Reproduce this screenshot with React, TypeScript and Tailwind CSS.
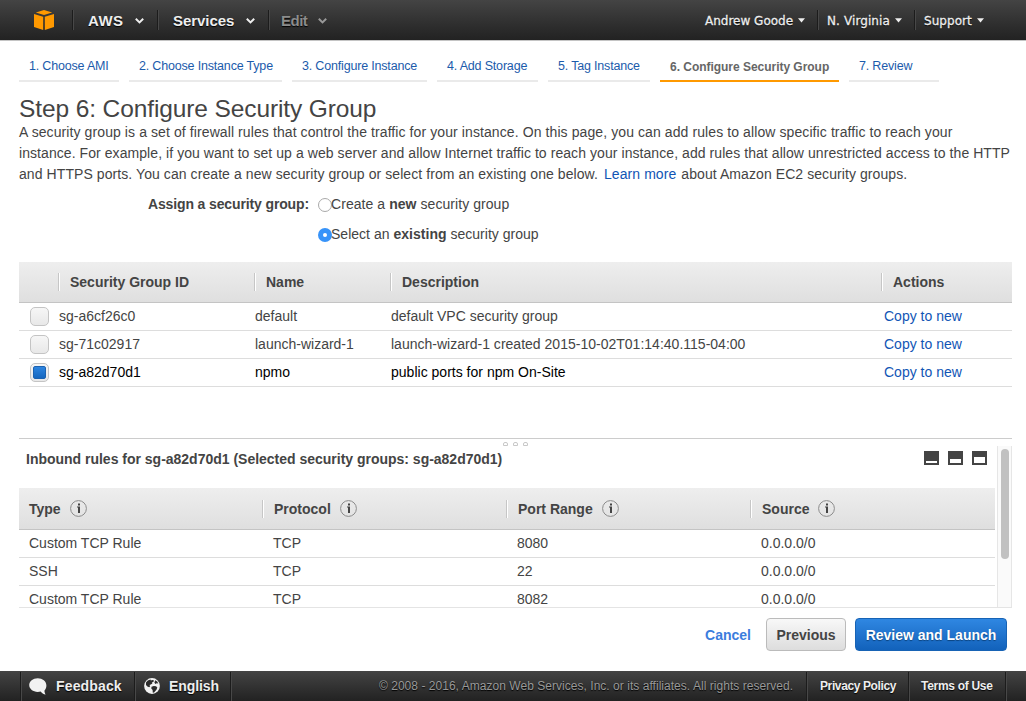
import React from "react";

const tabs = [
  { label: "1. Choose AMI", width: "w-[100px]" },
  { label: "2. Choose Instance Type", width: "w-[153px]" },
  { label: "3. Configure Instance", width: "w-[135px]" },
  { label: "4. Add Storage", width: "w-[101px]" },
  { label: "5. Tag Instance", width: "w-[102px]" },
  { label: "6. Configure Security Group", width: "w-[179px]", active: true },
  { label: "7. Review", width: "w-[90px]" },
];

const groups = [
  { id: "sg-a6cf26c0", name: "default", description: "default VPC security group" },
  { id: "sg-71c02917", name: "launch-wizard-1", description: "launch-wizard-1 created 2015-10-02T01:14:40.115-04:00" },
  { id: "sg-a82d70d1", name: "npmo", description: "public ports for npm On-Site", selected: true },
];

const rules = [
  { type: "Custom TCP Rule", protocol: "TCP", port: "8080", source: "0.0.0.0/0" },
  { type: "SSH", protocol: "TCP", port: "22", source: "0.0.0.0/0" },
  { type: "Custom TCP Rule", protocol: "TCP", port: "8082", source: "0.0.0.0/0" },
];

function Chevron({ className }: { className: string }) {
  return (
    <svg viewBox="0 0 9 6" className={`mt-[2px] h-[6px] w-[9px] shrink-0 ${className}`} fill="none" stroke="currentColor" strokeWidth="2">
      <path d="M0.8 0.8 4.5 4.4 8.2 0.8" />
    </svg>
  );
}

function Caret() {
  return (
    <svg viewBox="0 0 7 5" className="h-[5px] w-[7px] shrink-0" fill="currentColor">
      <path d="M0 0.3h7L3.5 4.5z" />
    </svg>
  );
}

function Divider() {
  return <span className="h-5 w-px shrink-0 bg-[#1c1c1c] shadow-[1px_0_0_#484848]" />;
}

function BarDivider() {
  return <span className="h-[29px] w-px shrink-0 bg-[#1c1c1c] shadow-[1px_0_0_#484848]" />;
}

function Header() {
  return (
    <header className="flex h-[41px] shrink-0 items-center border-b border-[#c4c4c4] bg-linear-to-b from-[#444] to-[#222] text-[#eee] [text-shadow:0_1px_1px_#000]">
      <svg viewBox="0 0 20 20" className="ml-[34px] h-5 w-5 shrink-0" fill="#ff9900">
        <path d="M10 0 18.2 2.4 10 5 1.8 2.4z" />
        <path d="M0 3.9 9.2 6.8V20L0 17z" />
        <path d="M20 3.9 10.8 6.8V20L20 17z" />
      </svg>
      <div className="ml-[18px] flex"><Divider /></div>
      <div className="flex w-[84px] items-center pl-[15px] text-[15px] leading-5 font-bold">
        <span className="w-[47px] pt-px whitespace-nowrap tracking-[0.4px]">AWS</span>
        <Chevron className="" />
      </div>
      <Divider />
      <div className="flex w-[110px] items-center pl-[15px] text-[15px] leading-5 font-bold">
        <span className="w-[73px] pt-px whitespace-nowrap tracking-[-0.05px]">Services</span>
        <Chevron className="" />
      </div>
      <Divider />
      <div className="flex items-center pl-[12px] text-[15px] leading-5 font-bold text-[#8c8c8c]">
        <span className="w-[37px] pt-px whitespace-nowrap tracking-[-0.5px]">Edit</span>
        <Chevron className="text-[#999]" />
      </div>
      <nav className="ml-auto flex items-center font-['DejaVu_Sans',sans-serif] text-[12px] leading-5 [-webkit-text-stroke:0.3px_#eee]">
        <div className="flex w-[112px] items-center gap-[5px] pt-px"><span className="whitespace-nowrap">Andrew Goode</span><Caret /></div>
        <Divider />
        <div className="flex w-[96px] items-center gap-[5px] pt-px pl-[9px]"><span className="whitespace-nowrap tracking-[0.1px]">N. Virginia</span><Caret /></div>
        <Divider />
        <div className="flex w-[111px] items-center gap-[5px] pt-px pl-[9px]"><span className="whitespace-nowrap tracking-[0.05px]">Support</span><Caret /></div>
      </nav>
    </header>
  );
}

function Wizard() {
  return (
    <nav className="flex h-[41px] shrink-0 gap-[10px] pl-[19px]">
      {tabs.map((tab) => (
        <div
          key={tab.label}
          className={`${tab.width} h-full border-b-2 pl-[10px] leading-[18px] whitespace-nowrap ${
            tab.active
              ? "border-[#f90] pt-[17px] text-[12px] font-bold tracking-[-0.03px] text-[#666]"
              : "border-[#eaeaea] pt-4 text-[12.5px] tracking-[-0.18px] text-[#1b5bab]"
          }`}
        >
          {tab.label}
        </div>
      ))}
    </nav>
  );
}

function Separator() {
  return <span className="h-[18px] w-px shrink-0 bg-[#c6c6c6] shadow-[1px_0_0_#fff]" />;
}

function Radio({ checked }: { checked?: boolean }) {
  return checked ? (
    <span className="-mr-px flex h-[14px] w-[14px] items-center justify-center rounded-full bg-[#3793f9]">
      <span className="h-[4px] w-[4px] rounded-full bg-white" />
    </span>
  ) : (
    <span className="-mr-px h-[14px] w-[14px] rounded-full border border-[#a9a9a9] bg-white" />
  );
}

function Checkbox({ checked }: { checked?: boolean }) {
  return (
    <span className="flex h-[19px] w-[19px] items-center justify-center rounded-[5px] border border-[#c4c4c4] bg-linear-to-b from-[#f6f6f6] to-[#e8e8e8]">
      {checked && <span className="h-[13px] w-[13px] rounded-[2px] border border-[#1c62b0] bg-linear-to-b from-[#2d85e0] to-[#1567bf]" />}
    </span>
  );
}

function Info() {
  return (
    <svg viewBox="0 0 17 17" className="h-[17px] w-[17px] shrink-0" fill="none">
      <circle cx="8.5" cy="8.5" r="7.9" stroke="#8c8c8c" />
      <path d="M8 3.500h2v2H8zM7 6.500h3v6.500H8V7.600H7z" fill="#444" />
    </svg>
  );
}

function WindowIcon({ size }: { size: number }) {
  return (
    <svg viewBox="0 0 15 14" className="h-[14px] w-[15px]" fill="#444" shapeRendering="crispEdges">
      <path fillRule="evenodd" d={`M0 0h15v14H0zM2 ${12 - size}h11v${size}H2z`} />
    </svg>
  );
}

function GroupTable() {
  const grid = "grid grid-cols-[40px_196px_136px_493px_128px]";
  return (
    <section className="ml-[19px] w-[993px] shrink-0 text-sm">
      <div className="grid h-[41px] grid-cols-[39px_196px_136px_491px_131px] items-center border-b border-[#c4c4c4] bg-linear-to-b from-[#eee] to-[#dfdfdf] font-bold text-[#444]">
        <span />
        {["Security Group ID", "Name", "Description", "Actions"].map((title) => (
          <div key={title} className="flex items-center gap-[11px]"><Separator /><span className="leading-4">{title}</span></div>
        ))}
      </div>
      {groups.map((g) => (
        <div key={g.id} className={`${grid} h-7 items-start border-b border-[#ddd] leading-[26px] whitespace-nowrap ${g.selected ? "text-black" : "text-[#444]"}`}>
          <span className="pt-1 pl-[11px]"><Checkbox checked={g.selected} /></span>
          <span>{g.id}</span>
          <span>{g.name}</span>
          <span className="tracking-[0.01px]">{g.description}</span>
          <a className="text-[#1155b5]">Copy to new</a>
        </div>
      ))}
    </section>
  );
}

function RulesPanel() {
  return (
    <section className="ml-[19px] flex h-[170px] w-[993px] shrink-0 flex-col border-t border-[#ccc]">
      <div className="flex h-[7px] shrink-0 items-center justify-center gap-[5px] pt-[3px]">
        {[0, 1, 2].map((i) => (
          <span key={i} className="h-1 w-[5px] rounded-t-[2px] border border-[#c8c8c8]" />
        ))}
      </div>
      <div className="flex h-[162px] overflow-hidden border-b border-[#e4e4e4]">
        <div className="w-[976px] shrink-0 text-sm text-[#444]">
          <div className="flex h-[42px] items-start justify-between pr-2 pl-[7px]">
            <h2 className="pt-[3px] leading-5 font-bold tracking-[-0.01px]">Inbound rules for sg-a82d70d1 (Selected security groups: sg-a82d70d1)</h2>
            <div className="flex gap-[9px] pt-[5px]">
              <WindowIcon size={2} />
              <WindowIcon size={4} />
              <WindowIcon size={6} />
            </div>
          </div>
          <div className="grid h-[42px] grid-cols-[243px_244px_244px_245px] items-center border-b border-[#c4c4c4] bg-linear-to-b from-[#eee] to-[#dfdfdf] font-bold">
            <div className="flex items-center pl-[10px]"><span className="mr-[9px]">Type</span><Info /></div>
            {["Protocol", "Port Range", "Source"].map((title) => (
              <div key={title} className="flex items-center"><Separator /><span className="mr-[9px] ml-[11px]">{title}</span><Info /></div>
            ))}
          </div>
          {rules.map((r, i) => (
            <div key={i} className="grid h-7 grid-cols-[244px_244px_244px_234px] items-start border-b border-[#ddd] pl-[10px] leading-[26px]">
              <span>{r.type}</span>
              <span>{r.protocol}</span>
              <span>{r.port}</span>
              <span>{r.source}</span>
            </div>
          ))}
        </div>
        <div className="ml-[2px] h-full w-[15px] shrink-0 border-x border-[#e6e6e6] bg-[#fafafa] pt-[3px] pl-[3px]">
          <div className="h-[110px] w-2 rounded-full bg-[#c1c1c1]" />
        </div>
      </div>
    </section>
  );
}

function Footer() {
  return (
    <footer className="mt-auto flex h-[30px] shrink-0 items-center bg-linear-to-b from-[#444] to-[#222] pl-5 text-[#eee] [text-shadow:0_1px_1px_#000]">
      <BarDivider />
      <div className="flex w-[113px] items-center pl-2 text-sm font-bold">
        <svg viewBox="0 0 18 17" className="mr-[9px] h-[17px] w-[18px]" fill="#f2f2f2">
          <path d="M8.700.3C4 .3.200 3.300.200 7.100s3.800 6.900 8.500 6.900c1 0 2-.1 2.900-.4 1.100 1.600 2.900 2.700 5.100 3-.8-1.100-1.300-2.700-1.200-4.200 1.200-1.200 1.900-3 1.900-4.900C17.400 3.300 13.400.3 8.700.3z" />
        </svg>
        <span className="tracking-[0.15px]">Feedback</span>
      </div>
      <BarDivider />
      <div className="flex w-[95px] items-center pl-[9px] text-sm font-bold">
        <svg viewBox="0 0 16 16" className="mr-[9px] h-4 w-4" fill="none">
          <circle cx="8" cy="8" r="7.900" fill="#f2f2f2" />
          <path d="M2 4.500 3.800 2.400 6.500 1.600l.4 1 1.500-.6 1.600.5-.7 1.400-1.500.5.6 1-1.600 1.200-1.300.3.700 1.300-1 1.100-1.800-.8L2 7zM11.200 2.200l2 1.400 1.100 1.900-1.600-.3-1.300.8-1-1.300zM7.500 8.800l2.300-.8 2.200.3 1.300 1.300-.7 2-2.500 2.900-1.300.2-.2-2.700-1.300-1.500z" fill="#2c2c2c" />
        </svg>
        <span className="tracking-[-0.08px]">English</span>
      </div>
      <BarDivider />
      <span className="ml-auto pr-[13px] text-[12px] tracking-[0.035px] whitespace-nowrap text-[#999]">© 2008 - 2016, Amazon Web Services, Inc. or its affiliates. All rights reserved.</span>
      <BarDivider />
      <span className="w-[101px] pl-[13px] text-[12px] font-bold whitespace-nowrap tracking-[-0.38px]">Privacy Policy</span>
      <BarDivider />
      <span className="w-[96px] pl-3 text-[12px] font-bold whitespace-nowrap tracking-[-0.3px]">Terms of Use</span>
      <BarDivider />
      <span className="w-5" />
    </footer>
  );
}

export default function App() {
  return (
    <div className="flex h-[701px] w-[1026px] flex-col overflow-hidden bg-white font-['Liberation_Sans',Arial,sans-serif] text-[#444]">
      <Header />
      <Wizard />
      <main className="flex flex-col">
        <div className="h-[180px] shrink-0 pl-[19px] text-sm leading-[21px]">
          <h1 className="mt-[11px] h-[29px] text-[24.5px] leading-[31px] tracking-[-0.11px] whitespace-nowrap">Step 6: Configure Security Group</h1>
          <p className="whitespace-nowrap">
            <span className="tracking-[0.094px]">A security group is a set of firewall rules that control the traffic for your instance. On this page, you can add rules to allow specific traffic to reach your</span><br />
            <span className="tracking-[0.067px]">instance. For example, if you want to set up a web server and allow Internet traffic to reach your instance, add rules that allow unrestricted access to the HTTP</span><br />
            <span className="tracking-[0.078px]">and HTTPS ports. You can create a new security group or select from an existing one below. <a className="mr-px ml-0.5 text-[#1155b5]">Learn more</a> about Amazon EC2 security groups.</span>
          </p>
          <div className="mt-[9px] flex">
            <strong className="w-[299px] pr-[9px] text-right tracking-[-0.13px]">Assign a security group:</strong>
            <div className="flex flex-col gap-[9px]">
              <label className="flex items-center"><Radio /><span className="tracking-[0.06px]">Create a <b>new</b> security group</span></label>
              <label className="flex items-center"><Radio checked /><span className="tracking-[0.02px]">Select an <b>existing</b> security group</span></label>
            </div>
          </div>
        </div>
        <GroupTable />
        <div className="h-[51px] shrink-0" />
        <RulesPanel />
        <div className="flex items-center justify-end pt-[10px] pr-[19px] text-sm font-bold">
          <a className="mr-[15px] text-[#3b7ddd]">Cancel</a>
          <button className="mr-[9px] h-[33px] w-[80px] rounded-[4px] border border-[#bbb] bg-linear-to-b from-[#f8f8f8] to-[#ddd]">Previous</button>
          <button className="h-[33px] w-[152px] rounded-[4px] border border-[#1763b5] bg-linear-to-b from-[#2f87e2] to-[#1262bb] whitespace-nowrap text-white [text-shadow:0_1px_1px_#0b437f]">Review and Launch</button>
        </div>
      </main>
      <Footer />
    </div>
  );
}
